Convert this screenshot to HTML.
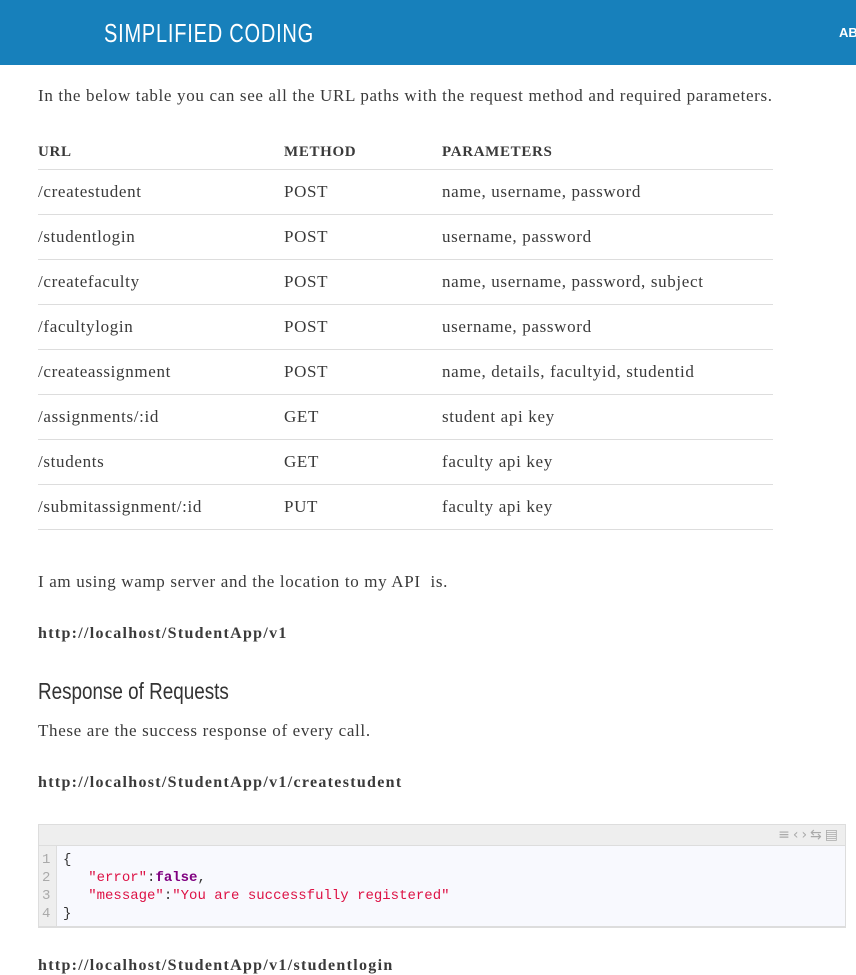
<!DOCTYPE html>
<html><head><meta charset="utf-8"><style>
body{margin:0;width:856px;height:968px;overflow:hidden;background:#fff;font-family:"Liberation Serif",serif;color:#3a3a3a;font-size:17px;letter-spacing:.66px}
.hd{position:absolute;left:0;top:0;width:856px;height:65px;background:#1780bb}
.logo{position:absolute;left:104px;top:18px;color:#fff;font-family:"Liberation Sans",sans-serif;font-size:26px;letter-spacing:1px;transform:scaleX(.77);transform-origin:left;white-space:nowrap}
.ab{position:absolute;left:839px;top:25px;color:#fff;font-family:"Liberation Sans",sans-serif;font-weight:bold;font-size:13px;letter-spacing:0}
.t{position:absolute;white-space:nowrap}
.b{font-weight:bold;font-size:16px;letter-spacing:1.3px}
.row{position:absolute;left:38px;width:735px;height:44px;border-bottom:1px solid #ddd}
.row span{position:absolute;top:12px}
.c1{left:0}.c2{left:246px}.c3{left:404px}
.th span{font-weight:bold;font-size:15px}
h2{position:absolute;left:38px;top:678px;margin:0;font-family:"Liberation Sans",sans-serif;font-weight:normal;font-size:23px;letter-spacing:0;color:#333;transform:scaleX(.82);transform-origin:left}
.code{position:absolute;left:38px;top:824px;width:806px;height:101px;border:1px solid #ddd;border-bottom:2px solid #ddd;background:#f8f9fe;letter-spacing:0}
.tb{height:20px;background:#eee;border-bottom:1px solid #ddd}
.gut{position:absolute;left:0;top:21px;width:17px;height:80px;background:#eee;border-right:1px solid #ddd}
pre{margin:0;position:absolute;top:26px;font-family:"Liberation Mono",monospace;font-size:14px;line-height:18px}
.s{color:#dd1144}.k{color:#800080;font-weight:bold}
</style></head><body>
<div class="hd"><div class="logo">SIMPLIFIED CODING</div><div class="ab">AB</div></div>
<div class="t" style="left:38px;top:86px">In the below table you can see all the URL paths with the request method and required parameters.</div>
<div class="row th" style="top:125px"><span class="c1" style="top:19px">URL</span><span class="c2" style="top:19px">METHOD</span><span class="c3" style="top:19px">PARAMETERS</span></div>
<div class="row" style="top:170px"><span class="c1">/createstudent</span><span class="c2">POST</span><span class="c3">name, username, password</span></div>
<div class="row" style="top:215px"><span class="c1">/studentlogin</span><span class="c2">POST</span><span class="c3">username, password</span></div>
<div class="row" style="top:260px"><span class="c1">/createfaculty</span><span class="c2">POST</span><span class="c3">name, username, password, subject</span></div>
<div class="row" style="top:305px"><span class="c1">/facultylogin</span><span class="c2">POST</span><span class="c3">username, password</span></div>
<div class="row" style="top:350px"><span class="c1">/createassignment</span><span class="c2">POST</span><span class="c3">name, details, facultyid, studentid</span></div>
<div class="row" style="top:395px"><span class="c1">/assignments/:id</span><span class="c2">GET</span><span class="c3">student api key</span></div>
<div class="row" style="top:440px"><span class="c1">/students</span><span class="c2">GET</span><span class="c3">faculty api key</span></div>
<div class="row" style="top:485px"><span class="c1">/submitassignment/:id</span><span class="c2">PUT</span><span class="c3">faculty api key</span></div>
<div class="t" style="left:38px;top:572px">I am using wamp server and the location to my API&nbsp; is.</div>
<div class="t b" style="left:38px;top:625px">http://localhost/StudentApp/v1</div>
<h2>Response of Requests</h2>
<div class="t" style="left:38px;top:721px">These are the success response of every call.</div>
<div class="t b" style="left:38px;top:774px">http://localhost/StudentApp/v1/createstudent</div>
<div class="code"><div class="tb"><span style="position:absolute;right:4px;top:2px;color:#aaa;font-size:14px;font-family:'DejaVu Sans',sans-serif;letter-spacing:3px">≡‹›⇆▤</span></div>
<div class="gut"></div>
<pre style="left:3px;color:#aaa">1
2
3
4</pre>
<pre style="left:24px;color:#333">{
   <span class="s">"error"</span>:<span class="k">false</span>,
   <span class="s">"message"</span>:<span class="s">"You are successfully registered"</span>
}</pre></div>
<div class="t b" style="left:38px;top:957px">http://localhost/StudentApp/v1/studentlogin</div>
</body></html>
